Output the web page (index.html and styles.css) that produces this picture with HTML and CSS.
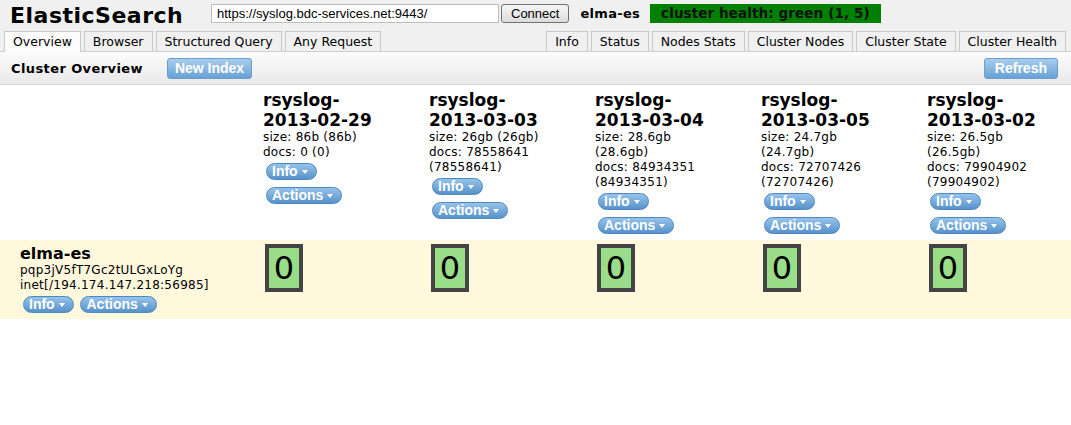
FILE: index.html
```html
<!DOCTYPE html>
<html>
<head>
<meta charset="utf-8">
<title>ElasticSearch Head</title>
<link rel="stylesheet" href="styles.css">
</head>
<body>
<div class="top">
  <div class="header">
    <h1 class="logo">ElasticSearch</h1>
    <input class="url" type="text" value="https://syslog.bdc-services.net:9443/">
    <button class="connect">Connect</button>
    <span class="cluster-name">elma-es</span>
    <span class="health">cluster health: green (1, 5)</span>
  </div>
  <div class="tabbar">
    <div class="tabs">
      <span class="tab active">Overview</span>
      <span class="tab">Browser</span>
      <span class="tab">Structured Query</span>
      <span class="tab">Any Request</span>
    </div>
    <div class="tabs">
      <span class="tab">Info</span>
      <span class="tab">Status</span>
      <span class="tab">Nodes Stats</span>
      <span class="tab">Cluster Nodes</span>
      <span class="tab">Cluster State</span>
      <span class="tab">Cluster Health</span>
    </div>
  </div>
</div>
<div class="toolbar">
  <h2 class="toolbar-title">Cluster Overview</h2>
  <button class="tbtn">New Index</button>
  <button class="tbtn refresh">Refresh</button>
</div>
<div class="grid head-row">
  <div class="corner"></div>
  <div class="idx">
    <h3 class="idx-name">rsyslog-2013-02-29</h3>
    <div class="idx-stats">size: 86b (86b)<br>docs: 0 (0)</div>
    <div class="pill-row"><span class="pill">Info<span class="caret"></span></span></div>
    <div class="pill-row"><span class="pill">Actions<span class="caret"></span></span></div>
  </div>
  <div class="idx">
    <h3 class="idx-name">rsyslog-2013-03-03</h3>
    <div class="idx-stats">size: 26gb (26gb)<br>docs: 78558641 (78558641)</div>
    <div class="pill-row"><span class="pill">Info<span class="caret"></span></span></div>
    <div class="pill-row"><span class="pill">Actions<span class="caret"></span></span></div>
  </div>
  <div class="idx">
    <h3 class="idx-name">rsyslog-2013-03-04</h3>
    <div class="idx-stats">size: 28.6gb (28.6gb)<br>docs: 84934351 (84934351)</div>
    <div class="pill-row"><span class="pill">Info<span class="caret"></span></span></div>
    <div class="pill-row"><span class="pill">Actions<span class="caret"></span></span></div>
  </div>
  <div class="idx">
    <h3 class="idx-name">rsyslog-2013-03-05</h3>
    <div class="idx-stats">size: 24.7gb (24.7gb)<br>docs: 72707426 (72707426)</div>
    <div class="pill-row"><span class="pill">Info<span class="caret"></span></span></div>
    <div class="pill-row"><span class="pill">Actions<span class="caret"></span></span></div>
  </div>
  <div class="idx">
    <h3 class="idx-name">rsyslog-2013-03-02</h3>
    <div class="idx-stats">size: 26.5gb (26.5gb)<br>docs: 79904902 (79904902)</div>
    <div class="pill-row"><span class="pill">Info<span class="caret"></span></span></div>
    <div class="pill-row"><span class="pill">Actions<span class="caret"></span></span></div>
  </div>
</div>
<div class="grid node-row">
  <div class="node">
    <div class="node-name">elma-es</div>
    <div class="node-line">pqp3jV5fT7Gc2tULGxLoYg</div>
    <div class="node-line">inet[/194.174.147.218:56985]</div>
    <div class="node-pills"><span class="pill">Info<span class="caret"></span></span> <span class="pill">Actions<span class="caret"></span></span></div>
  </div>
  <div class="cell"><div class="shard">0</div></div>
  <div class="cell"><div class="shard">0</div></div>
  <div class="cell"><div class="shard">0</div></div>
  <div class="cell"><div class="shard">0</div></div>
  <div class="cell"><div class="shard">0</div></div>
</div>
</body>
</html>
```

FILE: styles.css
```css
* { box-sizing: border-box; }

body {
  margin: 0;
  font-family: "DejaVu Sans", Verdana, sans-serif;
  font-size: 12px;
  color: #000;
  background: #fff;
}

.top {
  background: #f0f0f0;
}

.header {
  display: flex;
  align-items: flex-start;
  height: 29px;
}

.logo {
  margin: 2px 0 0 10px;
  width: 201px;
  font-size: 22px;
  line-height: 27px;
  letter-spacing: 0.5px;
  font-weight: bold;
  white-space: nowrap;
}

.url {
  margin: 4px 0 0 0;
  width: 288px;
  height: 19px;
  border: 1px solid #bdbdbd;
  background: #fff;
  padding: 0 5px;
  font-family: "Liberation Sans", Arial, sans-serif;
  font-size: 13px;
  color: #000;
}

.connect {
  margin: 4px 0 0 2px;
  height: 19px;
  padding: 0 9px;
  border: 1px solid #707070;
  border-radius: 3px;
  background: linear-gradient(#f6f6f6, #dddddd);
  font-family: "Liberation Sans", Arial, sans-serif;
  font-size: 13px;
  line-height: 17px;
  color: #000;
}

.cluster-name {
  margin: 5px 0 0 11px;
  font-size: 13px;
  font-weight: bold;
  letter-spacing: 0.3px;
  line-height: 18px;
}

.health {
  margin: 4px 0 0 10px;
  height: 19px;
  padding: 0 11px;
  background: #008000;
  color: #111;
  font-size: 13.5px;
  font-weight: bold;
  letter-spacing: 0.1px;
  line-height: 19px;
}

.tabbar {
  display: flex;
  justify-content: space-between;
  align-items: flex-end;
  height: 23px;
  padding: 0 5px 0 4px;
  border-bottom: 1px solid #cfcfcf;
}

.tabs {
  display: flex;
  gap: 3px;
}

.tab {
  height: 20px;
  padding: 0 8px;
  border: 1px solid #c8c8c8;
  border-bottom: none;
  background: #f0f0f0;
  font-size: 12.5px;
  line-height: 19px;
  color: #000;
}

.tab.active {
  height: 21px;
  margin-bottom: -1px;
  background: #fcfcfc;
}

.toolbar {
  display: flex;
  align-items: center;
  height: 33px;
  background: linear-gradient(#fcfcfc, #e9e9e9);
  border-bottom: 1px solid #d6d6d6;
}

.toolbar-title {
  margin: 0 24px 0 11px;
  font-size: 13px;
  letter-spacing: 0.4px;
  font-weight: bold;
}

.tbtn {
  height: 21px;
  padding: 0 7px;
  border: 1px solid #6a9dd0;
  border-radius: 3px;
  background: linear-gradient(#a8cdec, #69a1d5);
  color: #fff;
  font-family: "Liberation Sans", Arial, sans-serif;
  font-size: 14px;
  font-weight: bold;
  line-height: 19px;
}

.tbtn.refresh {
  margin-left: auto;
  margin-right: 13px;
  padding: 0 10px;
}

.grid {
  display: grid;
  grid-template-columns: 263px repeat(4, 166px) 1fr;
}

.head-row {
  padding: 5px 0 2px 0;
}

.idx-name {
  margin: 0;
  width: 124px;
  font-size: 17px;
  line-height: 20px;
  font-weight: bold;
}

.idx-stats {
  width: 124px;
  line-height: 15px;
  letter-spacing: 0.25px;
}

.pill-row {
  padding: 3px 0 4px 0;
  height: 24px;
}

.pill {
  display: inline-block;
  height: 17px;
  margin-left: 3px;
  padding: 0 8px 0 5px;
  border: 1px solid #4f89c2;
  border-radius: 9px;
  background: linear-gradient(#96c3ea, #5792cb);
  color: #fff;
  font-family: "Liberation Sans", Arial, sans-serif;
  font-size: 14px;
  font-weight: bold;
  line-height: 15px;
  letter-spacing: 0;
  vertical-align: top;
}

.caret {
  display: inline-block;
  width: 0;
  height: 0;
  margin-left: 4px;
  border-left: 3.5px solid transparent;
  border-right: 3.5px solid transparent;
  border-top: 4px solid #fff;
  vertical-align: 2px;
}

.node-row {
  background: #fff8dc;
}

.node {
  padding: 4px 0 6px 20px;
}

.node-name {
  font-size: 16px;
  font-weight: bold;
  line-height: 19px;
}

.node-line {
  line-height: 15px;
  letter-spacing: 0.25px;
}

.node-pills {
  padding-top: 3px;
  height: 20px;
  white-space: nowrap;
}

.cell {
  padding: 4px 0 0 2px;
}

.shard {
  width: 38px;
  height: 48px;
  border: 4px solid #444;
  background: #99dd88;
  font-size: 32px;
  line-height: 40px;
  text-align: center;
}
```
